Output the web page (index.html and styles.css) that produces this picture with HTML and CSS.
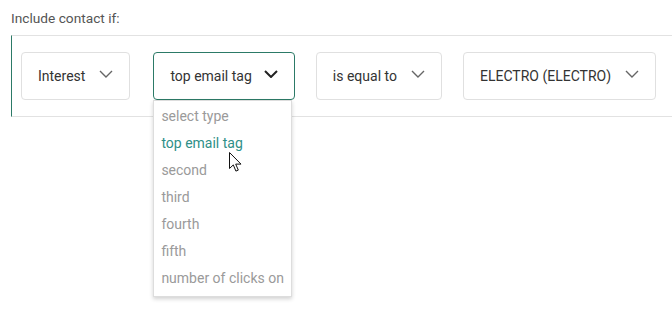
FILE: index.html
```html
<!DOCTYPE html>
<html lang="en">
<head>
    <meta charset="UTF-8">
    <title>Segment rule</title>
    <link rel="stylesheet" href="styles.css">
</head>
<body>
    <div class="rule-label">Include contact if:</div>

    <div class="rule-row">
        <div class="select">
            <span>Interest</span>
            <svg class="chevron" width="14" height="8" viewBox="0 0 14 8"><path d="M1 1l6 6 6-6" /></svg>
        </div>

        <div class="select select-open">
            <span>top email tag</span>
            <svg class="chevron" width="14" height="8" viewBox="0 0 14 8"><path d="M1 1l6 6 6-6" /></svg>

            <!-- list of types -->
            <ul class="dropdown">
                <li>select type</li>
                <li class="active">top email tag</li>
                <li>second</li>
                <li>third</li>
                <li>fourth</li>
                <li>fifth</li>
                <li>number of clicks on</li>
            </ul>
            <svg class="cursor" width="13" height="20" viewBox="0 0 13 20">
                <path d="M0.5 0.5v16l3.8-3.6 2.6 6.2 2.4-1-2.6-6h5.3z" />
            </svg>
        </div>

        <div class="select">
            <span>is equal to</span>
            <svg class="chevron" width="14" height="8" viewBox="0 0 14 8"><path d="M1 1l6 6 6-6" /></svg>
        </div>

        <div class="select">
            <span>ELECTRO (ELECTRO)</span>
            <svg class="chevron" width="14" height="8" viewBox="0 0 14 8"><path d="M1 1l6 6 6-6" /></svg>
        </div>
    </div>
</body>
</html>
```

FILE: styles.css
```css
:root {
    --green: #2c7a67;
    --teal: #2f8f88;
    --border: #e0e0e0;
    --text: #333;
    --muted: #9a9a9a;
}

* {
    box-sizing: border-box;
    margin: 0;
    padding: 0;
}

html,
body {
    min-height: 100%;
    height: 313px;
}

body {
    font-family: Roboto, "Liberation Sans", sans-serif;
    font-size: 14px;
    color: var(--text);
    background: #fff;
    padding: 10px 0 0 11px;
}

.rule-label {
    font-size: 13.7px;
    color: #555;
    line-height: 17px;
    margin-bottom: 8px;
}

/* row of selects */
.rule-row {
    display: flex;
    align-items: center;
    gap: 21px;
    padding: 16px 0 16px 9px;
    border-top: 1px solid #e2e2e2;
    border-bottom: 1px solid #e2e2e2;
    border-left: 1px solid var(--green);
}

.select {
    position: relative;
    display: flex;
    align-items: center;
    gap: 14px;
    height: 48px;
    padding: 0 16px;
    border: 1px solid var(--border);
    border-radius: 4px;
    background: #fff;
}

.select:first-child {
    margin-right: 2px;
}

.chevron {
    fill: none;
    stroke: #666;
    stroke-width: 1.4;
    margin-top: -4px;
}

.select-open {
    border-color: var(--green);
    gap: 12px;
}

.select-open .chevron {
    stroke: #222;
    stroke-width: 2;
}

/* open list */
.dropdown {
    position: absolute;
    top: 47px;
    left: -1px;
    width: 139px;
    list-style: none;
    background: #fff;
    border: 1px solid #ddd;
    box-shadow: 0 2px 4px rgba(0, 0, 0, 0.18);
    padding: 2px 0 4px;
    z-index: 2;
}

.dropdown li {
    line-height: 27px;
    padding-left: 7px;
    color: var(--muted);
    white-space: nowrap;
}

.dropdown li.active {
    color: var(--teal);
}

.cursor {
    position: absolute;
    left: 75px;
    top: 99px;
    z-index: 3;
    fill: #fff;
    stroke: #111;
    stroke-width: 1;
}
```
